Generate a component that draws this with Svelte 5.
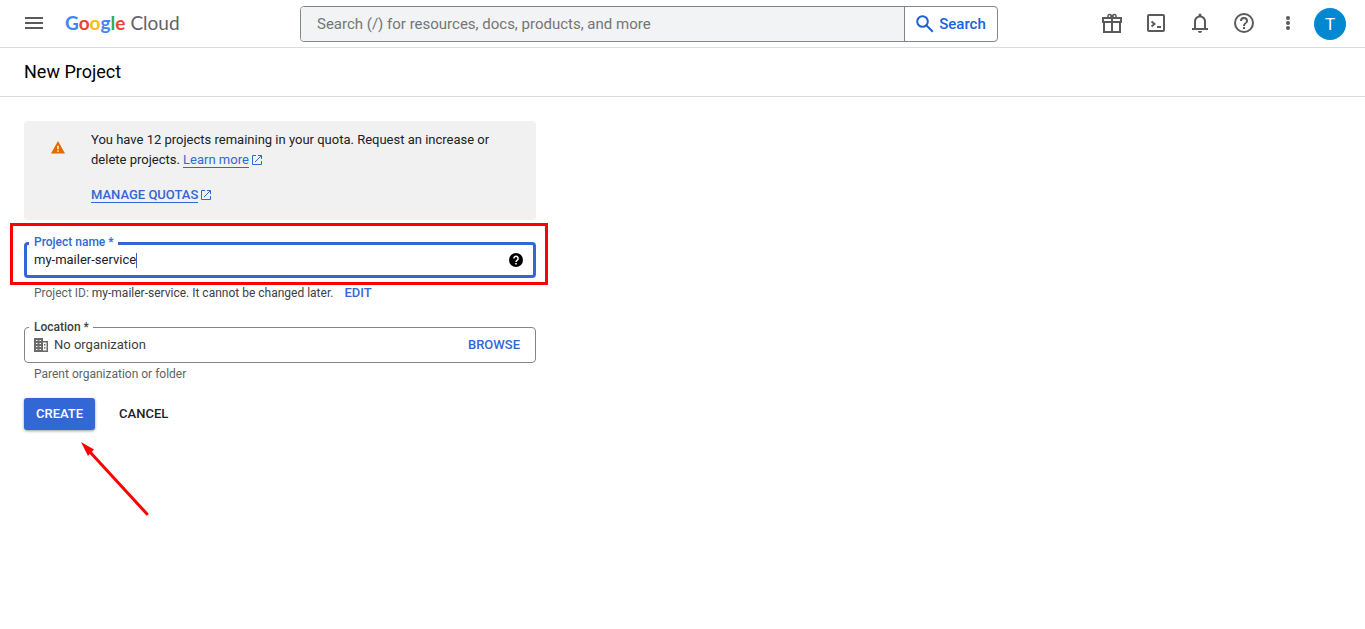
<script lang="ts">
  let projectName = $state('my-mailer-service');
  let query = $state('');

  const projectId = $derived(projectName.trim().toLowerCase().replace(/\s+/g, '-'));

  const logoLetters = [
    { char: 'G', color: 'blue' },
    { char: 'o', color: 'red' },
    { char: 'o', color: 'yellow' },
    { char: 'g', color: 'blue' },
    { char: 'l', color: 'green' },
    { char: 'e', color: 'red' }
  ];
</script>

{#snippet external()}
  <svg class="external" viewBox="0 0 12 12" width="12" height="12" aria-hidden="true">
    <path d="M5 1.500H1.500v9h9V7M7 1.500h3.500V5M10.500 1.500 4 8" />
  </svg>
{/snippet}

<header>
  <div class="brand">
    <button class="icon-btn" aria-label="Navigation menu">
      <svg viewBox="0 0 18 12" width="18" height="12">
        <path d="M0 0h18v2H0zM0 5h18v2H0zM0 10h18v2H0z" />
      </svg>
    </button>
    <a href="/" class="logo">
      <span class="google">{#each logoLetters as letter}<span class={letter.color}>{letter.char}</span>{/each}</span>
      <span>Cloud</span>
    </a>
  </div>

  <form class="search" role="search" onsubmit={(e) => e.preventDefault()}>
    <input
      type="text"
      bind:value={query}
      aria-label="Search"
      placeholder="Search (/) for resources, docs, products, and more"
    />
    <button type="submit">
      <svg viewBox="0 0 18 18" width="18" height="18" aria-hidden="true">
        <circle cx="6.500" cy="6.500" r="5.300" />
        <path d="m10.500 10.500 6.300 6.300" />
      </svg>
      Search
    </button>
  </form>

  <nav class="tools" aria-label="Tools">
    <button class="icon-btn" aria-label="Free trial">
      <svg class="line" viewBox="0 0 24 24" width="24" height="24">
        <path d="M3 7h18v4H3zM4 11v10h16V11M12 7v14" />
        <path d="M8.500 7c-1.500-2 0-4.300 2-3.300L12 5l1.500-1.300c2-1 3.500 1.300 2 3.300M11 7V4M13 7V4" stroke-width="1.500" />
      </svg>
    </button>
    <button class="icon-btn" aria-label="Activate Cloud Shell">
      <svg class="line" viewBox="0 0 24 24" width="24" height="24">
        <rect x="4" y="4" width="16" height="16" rx="1" />
        <path d="m7.500 10.500 3 2.500-3 2.500M13 16h4" />
      </svg>
    </button>
    <button class="icon-btn" aria-label="Notifications">
      <svg viewBox="0 0 24 24" width="24" height="24">
        <path d="M10 20h4c0 1.100-.9 2-2 2s-2-.9-2-2zM18 17v-6.500c0-3-1.600-5.200-4.500-5.800V4a1.500 1.500 0 0 0-3 0v.7C7.600 5.300 6 7.500 6 10.500V17H4v2h16v-2zM8 17v-6.500C8 8.200 9.500 6.500 12 6.500s4 1.700 4 4V17z" />
      </svg>
    </button>
    <button class="icon-btn" aria-label="Support">
      <svg viewBox="0 0 24 24" width="24" height="24">
        <path d="M11 18h2v-2h-2zM12 2a10 10 0 1 0 0 20 10 10 0 0 0 0-20zm0 18a8 8 0 1 1 0-16 8 8 0 0 1 0 16zm0-14a4 4 0 0 0-4 4h2a2 2 0 1 1 4 0c0 2-3 1.750-3 5h2c0-2.250 3-2.500 3-5a4 4 0 0 0-4-4z" />
      </svg>
    </button>
    <button class="icon-btn" aria-label="Settings and utilities">
      <svg viewBox="0 0 24 24" width="24" height="24">
        <circle cx="12" cy="7" r="2" />
        <circle cx="12" cy="12" r="2" />
        <circle cx="12" cy="17" r="2" />
      </svg>
    </button>
    <button class="avatar" aria-label="Account">T</button>
  </nav>
</header>

<div class="title-bar">
  <h1>New Project</h1>
</div>

<main>
  <section class="notice">
    <svg viewBox="0 0 14 13" width="14" height="13" aria-hidden="true">
      <path d="M7 0 0 12.500h14z" fill="#e06c00" />
      <path d="M6.300 4.700h1.400v3.600H6.300zM6.300 9.300h1.400v1.400H6.300z" fill="#fff" />
    </svg>
    <div>
      <p>
        You have 12 projects remaining in your quota. Request an increase or delete projects.
        <a href="#learn-more">Learn more</a>{@render external()}
      </p>
      <p class="quotas"><a href="#quotas">MANAGE QUOTAS</a>{@render external()}</p>
    </div>
  </section>

  <form onsubmit={(e) => e.preventDefault()}>
    <div class="field active">
      <label for="project-name">Project name *</label>
      <input id="project-name" type="text" size="1" bind:value={projectName} />
      <span class="caret"></span>
      <button type="button" class="help" aria-label="About project names">
        <svg viewBox="0 0 14 14" width="14" height="14">
          <circle cx="7" cy="7" r="7" />
          <path d="M4.900 5.400a2.100 2.100 0 1 1 3.300 1.700C7.400 7.700 7 8 7 9" fill="none" stroke="#fff" stroke-width="1.500" />
          <path d="M6.200 10h1.600v1.500H6.200z" fill="#fff" />
        </svg>
      </button>
      <div class="highlight"></div>
    </div>
    <p class="hint id-hint">
      Project ID: <span>{projectId}. It cannot be changed later.</span>
      <button type="button" class="text-btn">EDIT</button>
    </p>

    <div class="field">
      <label for="location">Location *</label>
      <svg class="building" viewBox="0 0 14 14" width="14" height="14" aria-hidden="true">
        <path
          fill-rule="evenodd"
          d="M0 0h9v3h5v11H0zM2 2v1h1.500V2zM5.500 2v1H7V2zM2 5v1h1.500V5zM5.500 5v1H7V5zM2 8v1h1.500V8zM5.500 8v1H7V8zM2 11v1h1.500v-1zM5.500 11v1H7v-1zM9 4.500v8h3.500v-8zM10 6h1.500v1.500H10zM10 9h1.500v1.500H10z"
        />
      </svg>
      <input id="location" type="text" value="No organization" readonly />
      <button type="button" class="text-btn browse">BROWSE</button>
    </div>
    <p class="hint location-hint">Parent organization or folder</p>

    <div class="actions">
      <button type="submit" class="create">CREATE</button>
      <button type="button" class="cancel">CANCEL</button>
      <svg class="arrow" viewBox="0 0 68 74" width="68" height="74" aria-hidden="true">
        <path d="M9 10 66 72" fill="none" stroke="#f00" stroke-width="3" stroke-linecap="round" />
        <path d="M0 0 13 7.500 10.500 10 7 14z" fill="#f00" />
      </svg>
    </div>
  </form>
</main>

<style>
  :global(body) {
    margin: 0;
    background: #fff;
    color: #202124;
    font-family: Roboto, 'Liberation Sans', sans-serif;
    font-size: 13px;
    line-height: 20px;
  }

  p,
  h1 {
    margin: 0;
  }

  button,
  input {
    font: inherit;
    color: inherit;
    border: none;
    background: none;
    padding: 0;
    margin: 0;
    min-width: 0;
    outline: none;
  }

  button {
    cursor: pointer;
  }

  svg {
    display: block;
    flex-shrink: 0;
  }

  /* Header */
  header {
    display: flex;
    align-items: center;
    height: 47px;
    border-bottom: 1px solid #dadce0;
  }

  .brand {
    display: flex;
    align-items: center;
    flex: 0 0 300px;
  }

  .icon-btn {
    display: flex;
    align-items: center;
    justify-content: center;
    box-sizing: border-box;
    width: 44px;
    height: 44px;
    padding-bottom: 2px;
    fill: #5a5a5a;
  }

  .brand .icon-btn {
    margin-left: 12px;
  }

  .line {
    fill: none;
    stroke: #5a5a5a;
    stroke-width: 2;
  }

  .logo {
    display: flex;
    gap: 5px;
    margin-left: 9px;
    padding-bottom: 2px;
    font-family: Lato, sans-serif;
    font-size: 19px;
    line-height: 24px;
    color: #5f6368;
    text-decoration: none;
  }

  .google {
    font-weight: 700;
  }

  .blue {
    color: #4285f4;
  }

  .red {
    color: #ea4335;
  }

  .yellow {
    color: #fbbc04;
  }

  .green {
    color: #34a853;
  }

  .search {
    display: flex;
    flex: 0 1 698px;
    box-sizing: border-box;
    height: 36px;
    border: 1px solid #80868b;
    border-radius: 4px;
    overflow: hidden;
    font-size: 15px;
  }

  .search input {
    flex: 1;
    padding: 0 16px;
    background: #f1f3f4;
  }

  .search input::placeholder {
    color: #757575;
    opacity: 1;
  }

  .search button {
    display: flex;
    align-items: center;
    justify-content: center;
    gap: 5px;
    box-sizing: border-box;
    width: 93px;
    border-left: 1px solid #80868b;
    font-weight: 500;
    color: #1a62d6;
  }

  .search svg {
    fill: none;
    stroke: #1a62d6;
    stroke-width: 2;
  }

  .tools {
    display: flex;
    align-items: center;
    margin-left: auto;
    padding-right: 19px;
  }

  .avatar {
    width: 32px;
    height: 32px;
    margin-left: 4px;
    border-radius: 50%;
    background: #0288d1;
    color: #fff;
    font-size: 17px;
  }

  .title-bar {
    display: flex;
    align-items: center;
    height: 48px;
    padding: 0 24px;
    border-bottom: 1px solid #dadce0;
  }

  h1 {
    font-size: 18px;
    font-weight: 400;
    line-height: 24px;
    color: #000;
  }

  main {
    max-width: 512px;
    padding: 24px 24px 120px;
  }

  /* Quota notice */
  .notice {
    display: flex;
    gap: 26px;
    padding: 9px 40px 15px 27px;
    border-radius: 4px;
    background: #f1f1f1;
  }

  .notice > svg {
    margin-top: 11px;
  }

  .notice a {
    color: #3367d6;
    text-decoration: none;
    border-bottom: 1px solid #3367d6;
  }

  .quotas {
    margin-top: 15px;
    font-weight: 500;
  }

  .external {
    display: inline-block;
    margin-left: 2px;
    vertical-align: -2px;
    fill: none;
    stroke: #3367d6;
  }

  /* Form fields */
  .field {
    position: relative;
    display: flex;
    align-items: center;
    box-sizing: border-box;
    height: 36px;
    padding: 0 15px 0 9px;
    border: 1px solid #80868b;
    border-radius: 4px;
    color: #3c4043;
  }

  .field.active {
    margin-top: 22px;
    padding: 0 10px 0 7px;
    border: 3px solid #3367d6;
    color: #202124;
  }

  .field label {
    position: absolute;
    top: -9px;
    left: 4px;
    padding: 0 4px 0 5px;
    background: #fff;
    font-size: 12px;
    font-weight: 500;
    line-height: 16px;
  }

  .field.active label {
    top: -11px;
    left: 2px;
    color: #3367d6;
  }

  #project-name {
    field-sizing: content;
    caret-color: transparent;
  }

  .caret {
    width: 1px;
    height: 15px;
    background: #3367d6;
  }

  .help {
    margin-left: auto;
  }

  .highlight {
    position: absolute;
    inset: -22px -15px -10px -17px;
    border: 3px solid #f00;
    pointer-events: none;
  }

  .building {
    margin-right: 6px;
    fill: #6b6b6b;
  }

  #location {
    flex: 1;
  }

  .hint {
    padding-left: 10px;
    font-size: 12px;
    line-height: 16px;
    color: #5f6368;
  }

  .hint span {
    color: #3c4043;
  }

  .id-hint {
    margin: 7px 0 26px;
  }

  .location-hint {
    margin: 3px 0 16px;
  }

  .text-btn {
    font-size: 13px;
    font-weight: 500;
    line-height: 16px;
    color: #3367d6;
  }

  .id-hint .text-btn {
    margin-left: 8px;
  }

  /* Actions */
  .actions {
    position: relative;
    display: flex;
    gap: 12px;
  }

  .create,
  .cancel {
    height: 32px;
    padding: 0 12px;
    border-radius: 3px;
    font-weight: 500;
    color: #202124;
  }

  .create {
    background: #3367d6;
    box-shadow: 0 1px 3px rgba(0, 0, 0, 0.4);
    color: #fff;
  }

  .arrow {
    position: absolute;
    top: 44px;
    left: 57px;
  }
</style>
